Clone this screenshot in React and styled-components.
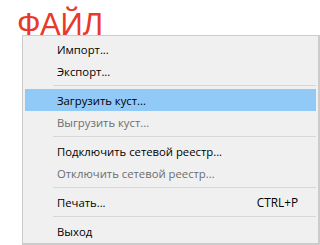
import styled, { createGlobalStyle } from "styled-components";

const GlobalStyle = createGlobalStyle`
  html, body {
    margin: 0;
    padding: 0;
    background: #ffffff;
  }
`;

const Page = styled.div`
  width: 320px;
  height: 245px;
  overflow: hidden;
`;

const Title = styled.div`
  box-sizing: border-box;
  height: 35px;
  padding: 9px 0 0 17px;
  font-family: "Liberation Sans", Arial, sans-serif;
  font-size: 31px;
  line-height: 31px;
  color: #e8392b;
`;

const Menu = styled.div`
  position: relative;
  box-sizing: border-box;
  margin-left: 22px;
  width: 298px;
  height: 210px;
  padding: 2px 2px 1px 2px;
  background: #f0f0f0;
  border: 1px solid #cccccc;
  border-right-width: 2px;
  border-bottom-width: 2px;
  font-family: "Open Sans", "Noto Sans", sans-serif;
  font-size: 11.3px;
`;

const Item = styled.div`
  display: flex;
  align-items: center;
  height: 22px;
  padding: 0 18px 0 32px;
  color: ${(p) => (p.disabled ? "#6d6d6d" : "#000000")};
  background: ${(p) => (p.active ? "#91c9f7" : "transparent")};
`;

const Label = styled.span`
  flex: 1;
`;

const Shortcut = styled.span`
  font-size: 11.8px;
`;

const Separator = styled.div`
  height: 7px;
  display: flex;
  align-items: center;
  padding-left: 28px;
  &::after {
    content: "";
    flex: 1;
    height: 1px;
    background: #d7d7d7;
  }
`;

const items = [
  { label: "Импорт..." },
  { label: "Экспорт..." },
  { sep: true },
  { label: "Загрузить куст...", active: true },
  { label: "Выгрузить куст...", disabled: true },
  { sep: true },
  { label: "Подключить сетевой реестр..." },
  { label: "Отключить сетевой реестр...", disabled: true },
  { sep: true },
  { label: "Печать...", shortcut: "CTRL+P" },
  { sep: true },
  { label: "Выход" },
];

export default function App() {
  return (
    <Page>
      <GlobalStyle />
      <Title>ФАЙЛ</Title>
      <Menu>
        {items.map((it, i) =>
          it.sep ? (
            <Separator key={i} />
          ) : (
            <Item key={i} active={it.active} disabled={it.disabled}>
              <Label>{it.label}</Label>
              {it.shortcut && <Shortcut>{it.shortcut}</Shortcut>}
            </Item>
          )
        )}
      </Menu>
    </Page>
  );
}
